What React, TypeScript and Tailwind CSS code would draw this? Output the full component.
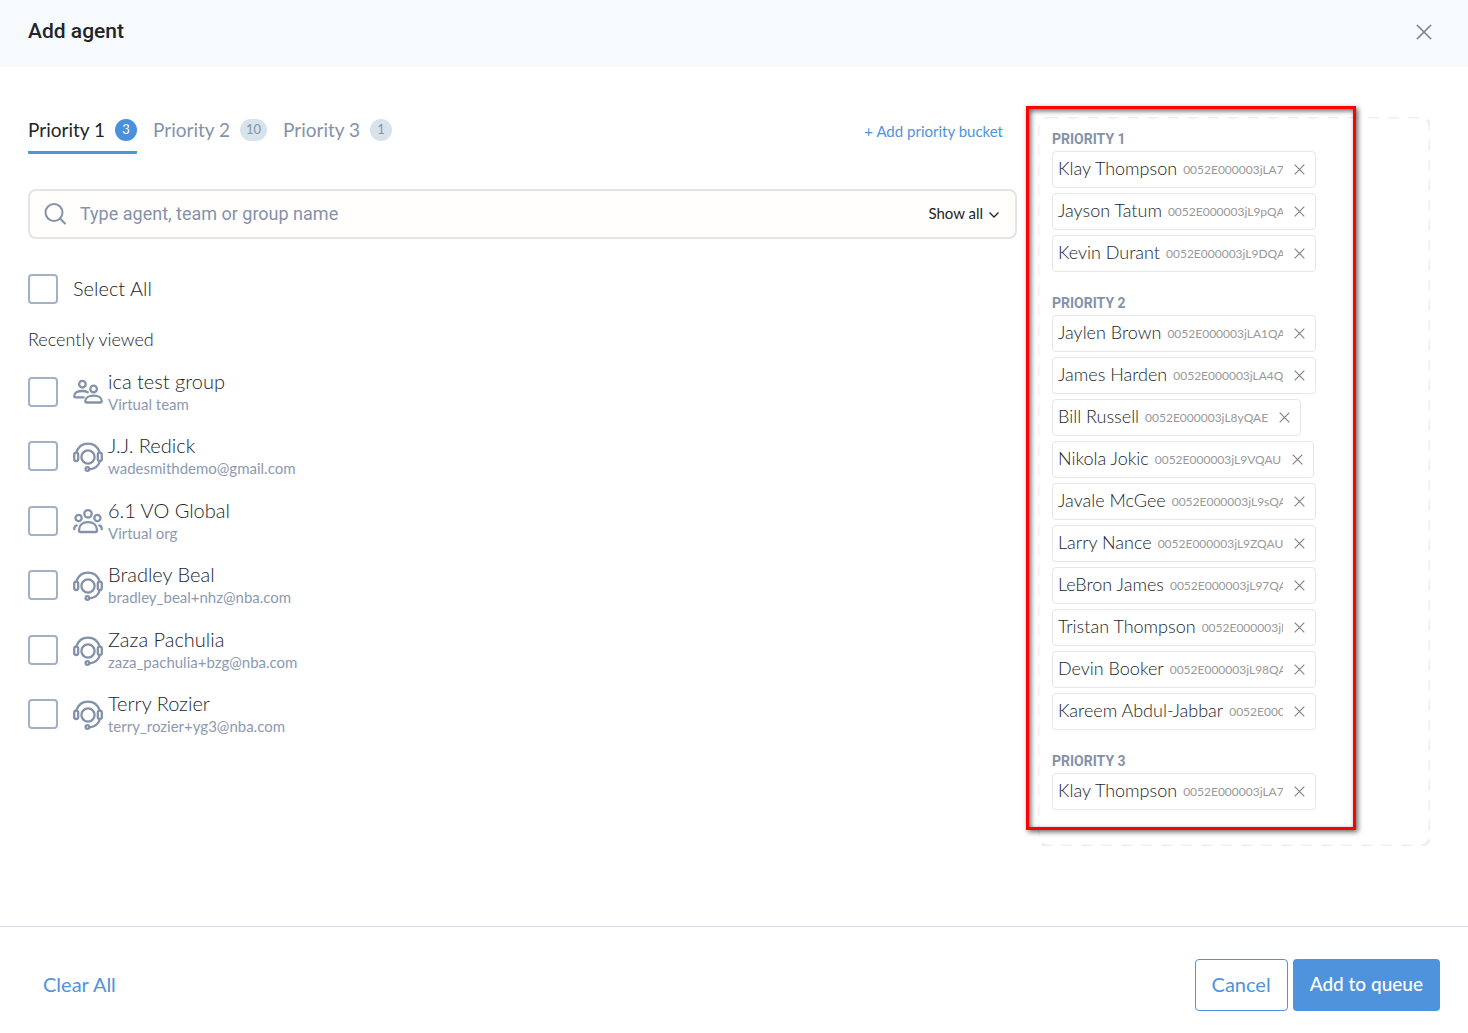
import React, { useState } from "react";

type Kind = "team" | "agent" | "org";

const tabs = [
  { name: "Priority 1", count: 3 },
  { name: "Priority 2", count: 10 },
  { name: "Priority 3", count: 1 },
];

const recent: { name: string; detail: string; kind: Kind }[] = [
  { name: "ica test group", detail: "Virtual team", kind: "team" },
  { name: "J.J. Redick", detail: "wadesmithdemo@gmail.com", kind: "agent" },
  { name: "6.1 VO Global", detail: "Virtual org", kind: "org" },
  { name: "Bradley Beal", detail: "bradley_beal+nhz@nba.com", kind: "agent" },
  { name: "Zaza Pachulia", detail: "zaza_pachulia+bzg@nba.com", kind: "agent" },
  { name: "Terry Rozier", detail: "terry_rozier+yg3@nba.com", kind: "agent" },
];

const buckets = [
  {
    title: "PRIORITY 1",
    agents: [
      { name: "Klay Thompson", id: "0052E000003jLA7QAM" },
      { name: "Jayson Tatum", id: "0052E000003jL9pQAE" },
      { name: "Kevin Durant", id: "0052E000003jL9DQAU" },
    ],
  },
  {
    title: "PRIORITY 2",
    agents: [
      { name: "Jaylen Brown", id: "0052E000003jLA1QAM" },
      { name: "James Harden", id: "0052E000003jLA4QAM" },
      { name: "Bill Russell", id: "0052E000003jL8yQAE" },
      { name: "Nikola Jokic", id: "0052E000003jL9VQAU" },
      { name: "Javale McGee", id: "0052E000003jL9sQAE" },
      { name: "Larry Nance", id: "0052E000003jL9ZQAU" },
      { name: "LeBron James", id: "0052E000003jL97QAE" },
      { name: "Tristan Thompson", id: "0052E000003jL9QQAU" },
      { name: "Devin Booker", id: "0052E000003jL98QAE" },
      { name: "Kareem Abdul-Jabbar", id: "0052E000003jL9AQAU" },
    ],
  },
  {
    title: "PRIORITY 3",
    agents: [{ name: "Klay Thompson", id: "0052E000003jLA7QAM" }],
  },
];

const CloseIcon = ({ className }: { className: string }) => (
  <svg viewBox="0 0 16 16" className={className} fill="none" stroke="currentColor" strokeWidth="1.6" aria-hidden="true">
    <path d="M1 1l14 14M15 1L1 15" />
  </svg>
);

const KindIcon = ({ kind }: { kind: Kind }) => (
  <svg
    viewBox="0 0 30 30"
    className="size-[30px] shrink-0 text-[#8492a9]"
    fill="none"
    stroke="currentColor"
    strokeWidth="2.3"
    strokeLinecap="round"
    strokeLinejoin="round"
    aria-hidden="true"
  >
    {kind === "agent" && (
      <>
        <circle cx="15" cy="15" r="6.6" />
        <path d="M3.4 10.2C5.2 5 9.7 1.6 15 1.6s9.8 3.4 11.6 8.6" />
        <rect x="1.2" y="10.6" width="4" height="8.4" rx="2" />
        <rect x="24.8" y="10.6" width="4" height="8.4" rx="2" />
        <path d="M27 19c-1.4 4.5-5.4 7.800-10.400 8.400" />
        <circle cx="14.4" cy="27" r="1.800" />
      </>
    )}
    {kind === "team" && (
      <>
        <circle cx="9.4" cy="6.2" r="3.3" />
        <circle cx="20.6" cy="11" r="3.3" />
        <path d="M10.6 19.400H2.400c-.8 0-1.200-.5-1.200-1.200 0-3.400 3.200-5.200 8.200-5.200 2.200 0 4 .4 5.400 1.200" />
        <path d="M20.6 17.600c-5 0-8.400 2.200-8.400 5.600 0 .8.400 1.300 1.200 1.300h14.200c.8 0 1.200-.5 1.200-1.300 0-3.400-3.200-5.600-8.200-5.600z" />
      </>
    )}
    {kind === "org" && (
      <>
        <circle cx="15" cy="6.8" r="3.700" />
        <circle cx="5.6" cy="11" r="3.100" />
        <circle cx="24.4" cy="11" r="3.100" />
        <path d="M15 15.200c-5.600 0-9 3-9 8 0 1 .6 1.800 1.600 1.800h14.800c1 0 1.600-.8 1.600-1.800 0-5-3.400-8-9-8z" />
        <path d="M3.600 18.400C2 19 1.200 20.400 1.200 22.200M26.400 18.400c1.600.6 2.400 2 2.400 3.800" />
      </>
    )}
  </svg>
);

const box =
  "size-[30px] shrink-0 appearance-none rounded-[4px] border-2 border-[#a3b1c6] bg-white checked:bg-[#4f93dc]";

const Header = () => (
  <header className="flex h-[67px] items-start justify-between bg-[#f6fafd] pl-7 pr-9 pt-[19px]">
    <h1 className="font-['Roboto'] text-[21px] font-medium leading-6 text-[#212529]">Add agent</h1>
    <button type="button" aria-label="Close" className="mt-[5px] text-[#808080]">
      <CloseIcon className="size-4" />
    </button>
  </header>
);

const Tabs = () => {
  const [active, setActive] = useState(0);
  return (
    <div className="flex items-start justify-between pr-[14px]">
      <div className="flex gap-4">
        {tabs.map((tab, i) => (
          <button
            key={tab.name}
            type="button"
            onClick={() => setActive(i)}
            className={`flex h-[37px] items-start gap-[10px] rounded-[1px] border-b-3 text-[19px] leading-[26px] ${
              active === i ? "border-[#4f93dc] text-[#212529]" : "border-transparent text-[#8492a9]"
            }`}
          >
            {tab.name}
            <span
              className={`mt-[2px] h-[22px] min-w-[22px] rounded-full px-[6px] text-[13px] leading-5 ${
                active === i ? "bg-[#4a90dc] text-white" : "bg-[#d8e2ea] text-[#8492a9]"
              }`}
            >
              {tab.count}
            </span>
          </button>
        ))}
      </div>
      <button type="button" className="text-[15px] leading-7 text-[#4f93dc]">
        + Add priority bucket
      </button>
    </div>
  );
};

const SearchBar = () => (
  <div className="mt-[35px] flex h-[50px] items-center rounded-lg border-2 border-[#e4e4e4] bg-[#fffefc] pl-[14px] pr-4">
    <svg viewBox="0 0 22 22" className="size-[22px] text-[#8492a9]" fill="none" stroke="currentColor" strokeWidth="2" aria-hidden="true">
      <circle cx="10" cy="9.5" r="8.5" />
      <path d="M16 15.5l5 5" strokeLinecap="round" />
    </svg>
    <input
      type="text"
      aria-label="Agent, team or group"
      placeholder="Type agent, team or group name"
      className="ml-[14px] min-w-0 flex-1 font-['Roboto'] text-lg text-[#212529] outline-none placeholder:text-[#8492a9]"
    />
    <button type="button" className="flex items-center gap-[6px] pb-[2px] text-[15px] leading-5 text-[#212529]">
      Show all
      <svg viewBox="0 0 10 6" className="mt-1 h-[6px] w-[10px]" fill="none" stroke="currentColor" strokeWidth="1.3" aria-hidden="true">
        <path d="M.5.5L5 5 9.500.5" />
      </svg>
    </button>
  </div>
);

const AgentList = () => (
  <section>
    <label className="mt-[35px] flex items-start gap-[15px] text-xl font-light leading-7 text-[#212529]">
      <input type="checkbox" className={box} />
      Select All
    </label>
    <h2 className="mt-[23px] text-lg font-light leading-6 text-[#212529]">Recently viewed</h2>
    <ul className="mt-[17px]">
      {recent.map((item) => (
        <li key={item.name} className="h-16 even:h-[65px]">
          <label className="flex items-start">
            <input type="checkbox" className={`${box} mt-[9px]`} />
            <span className="ml-[15px] mt-[10px]">
              <KindIcon kind={item.kind} />
            </span>
            <span className="ml-[5px] flex flex-col">
              <span className="text-xl font-light leading-[26px] text-[#212529]">{item.name}</span>
              <span className="text-[15px] leading-5 text-[#8c9ab1]">{item.detail}</span>
            </span>
          </label>
        </li>
      ))}
    </ul>
  </section>
);

const Selected = () => (
  <aside className="relative w-[392px] shrink-0 pb-9 pl-[14px] pt-3">
    <svg className="absolute inset-0 size-full" aria-hidden="true">
      <rect width="100%" height="100%" rx="10" fill="none" stroke="#ebf0f5" strokeWidth="3" strokeDasharray="11 9" />
    </svg>
    <div className="relative flex flex-col gap-[21px]">
      {buckets.map((bucket) => (
        <section key={bucket.title}>
          <h3 className="h-[22px] font-['Roboto'] text-sm font-bold leading-5 text-[#8492a9]">
            {bucket.title}
          </h3>
          <ul className="flex flex-col items-start gap-[5px]">
            {bucket.agents.map((agent) => (
              <li
                key={agent.name}
                className="flex h-[37px] max-w-[264px] items-center rounded-[4px] border border-[#e6e6e6] bg-white pl-[5px] pr-[10px]"
              >
                <span className="flex min-w-0 items-center overflow-hidden whitespace-nowrap">
                  <span className="pb-[3px] text-lg font-light text-[#212529]">{agent.name}</span>
                  <span className="ml-[6px] text-xs text-[#999999]">{agent.id}</span>
                </span>
                <button type="button" aria-label={`Remove ${agent.name}`} className="ml-[11px] shrink-0 text-[#808080]">
                  <CloseIcon className="size-[11px]" />
                </button>
              </li>
            ))}
          </ul>
        </section>
      ))}
    </div>
    {/* Highlight around the selected agents */}
    <div className="pointer-events-none absolute -left-3 -top-[11px] bottom-4 w-[330px] border-3 border-[#ff0000] shadow-[2px_2px_5px_rgba(0,0,0,0.6),inset_2px_2px_5px_rgba(0,0,0,0.6)]" />
  </aside>
);

const Footer = () => (
  <footer className="flex h-[107px] items-center justify-between border-t border-[#d5deea] pl-[43px] pr-7 pt-[10px] text-xl">
    <button type="button" className="pb-[2px] text-[#4f93dc]">
      Clear All
    </button>
    <div className="flex gap-[5px]">
      <button type="button" className="h-[52px] rounded-[4px] border border-[#4f93dc] px-4 pb-[2px] text-[#4f93dc]">
        Cancel
      </button>
      <button type="button" className="h-[52px] rounded-[4px] bg-[#4f93dc] px-[17px] pb-[2px] text-[19px] font-medium text-white">
        Add to queue
      </button>
    </div>
  </footer>
);

const App = () => (
  <div className="flex min-h-screen flex-col bg-white font-['Lato',sans-serif]">
    <Header />
    <main className="flex flex-1 items-start gap-[21px] pl-7 pr-[38px] pt-[50px]">
      <div className="min-w-0 flex-1">
        <Tabs />
        <SearchBar />
        <AgentList />
      </div>
      <Selected />
    </main>
    <Footer />
  </div>
);

export default App;
